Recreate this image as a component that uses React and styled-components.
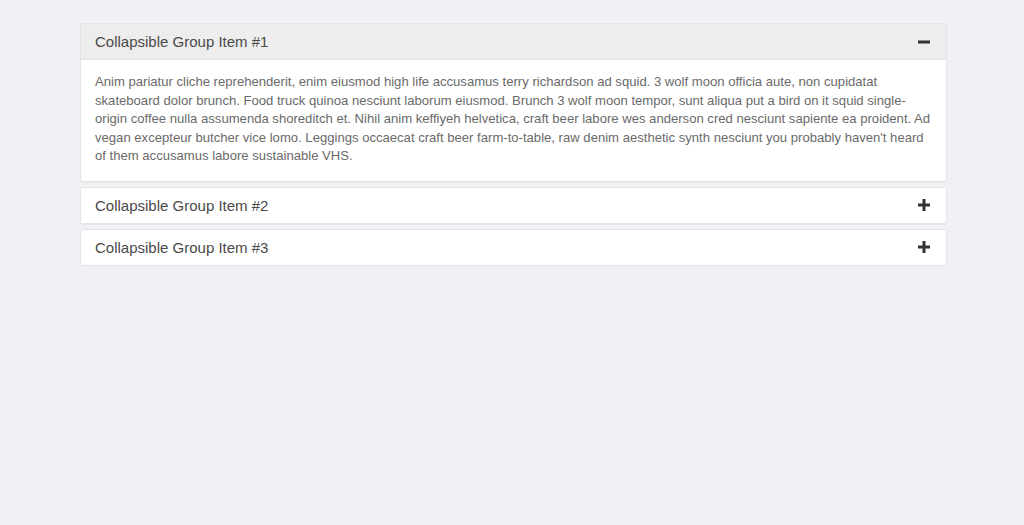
import React, { useState } from "react";
import styled, { createGlobalStyle } from "styled-components";

const GlobalStyle = createGlobalStyle`
  html, body {
    margin: 0;
    padding: 0;
    background: #f0f1f5;
    font-family: "Liberation Sans", Arial, sans-serif;
  }
`;

const items = [
  {
    title: "Collapsible Group Item #1",
    body:
      "Anim pariatur cliche reprehenderit, enim eiusmod high life accusamus terry richardson ad squid. 3 wolf moon officia aute, non cupidatat skateboard dolor brunch. Food truck quinoa nesciunt laborum eiusmod. Brunch 3 wolf moon tempor, sunt aliqua put a bird on it squid single-origin coffee nulla assumenda shoreditch et. Nihil anim keffiyeh helvetica, craft beer labore wes anderson cred nesciunt sapiente ea proident. Ad vegan excepteur butcher vice lomo. Leggings occaecat craft beer farm-to-table, raw denim aesthetic synth nesciunt you probably haven't heard of them accusamus labore sustainable VHS.",
  },
  { title: "Collapsible Group Item #2", body: "" },
  { title: "Collapsible Group Item #3", body: "" },
];

const Toggle = ({ open }) => (
  <svg width="12" height="12" viewBox="0 0 12 12">
    <rect x="0" y="4.5" width="12" height="3" fill="#333" />
    {!open && <rect x="4.5" y="0" width="3" height="12" fill="#333" />}
  </svg>
);

const App = () => {
  const [active, setActive] = useState(0);
  return (
    <>
      <GlobalStyle />
      <Page>
        <Group>
          {items.map((item, i) => (
            <Panel key={i}>
              <Heading
                $open={active === i}
                onClick={() => setActive(active === i ? -1 : i)}
              >
                <span>{item.title}</span>
                <Toggle open={active === i} />
              </Heading>
              {active === i && <Body>{item.body}</Body>}
            </Panel>
          ))}
        </Group>
      </Page>
    </>
  );
};

export default App;

const Page = styled.div`
  padding: 23px 77px 0 80px;
`;

const Group = styled.div`
  display: flex;
  flex-direction: column;
  gap: 5px;
`;

const Panel = styled.div`
  background: #fff;
  border: 1px solid #e3e4e8;
  border-radius: 3px;
  box-shadow: 0 1px 1px rgba(0, 0, 0, 0.04);
  overflow: hidden;
`;

const Heading = styled.div`
  display: flex;
  align-items: center;
  justify-content: space-between;
  height: 35px;
  padding: 0 16px 0 14px;
  background: ${({ $open }) => ($open ? "#ededed" : "#fff")};
  border-bottom: ${({ $open }) => ($open ? "1px solid #e3e4e8" : "none")};
  cursor: pointer;

  span {
    font-size: 15px;
    color: #4a4a4a;
  }
`;

const Body = styled.div`
  padding: 13px 14px 15px 14px;
  font-size: 13.1px;
  line-height: 18.6px;
  color: #6a6a6a;
`;
